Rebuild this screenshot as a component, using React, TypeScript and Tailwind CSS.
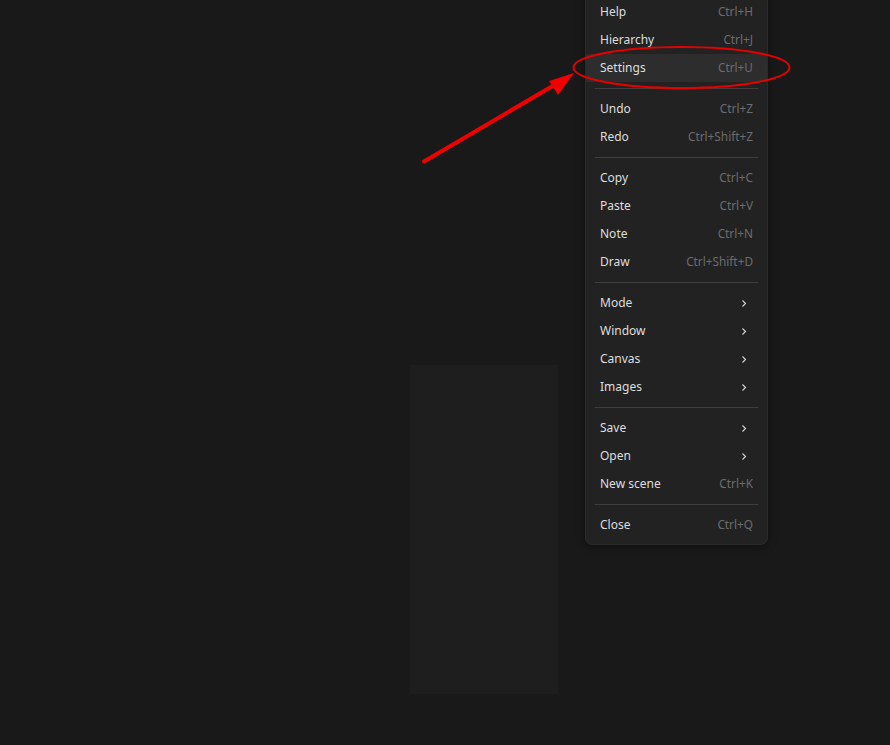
import React from "react";

type Item =
  | { kind: "item"; label: string; shortcut?: string; sub?: boolean; active?: boolean }
  | { kind: "sep" };

const items: Item[] = [
  { kind: "item", label: "Help", shortcut: "Ctrl+H" },
  { kind: "item", label: "Hierarchy", shortcut: "Ctrl+J" },
  { kind: "item", label: "Settings", shortcut: "Ctrl+U", active: true },
  { kind: "sep" },
  { kind: "item", label: "Undo", shortcut: "Ctrl+Z" },
  { kind: "item", label: "Redo", shortcut: "Ctrl+Shift+Z" },
  { kind: "sep" },
  { kind: "item", label: "Copy", shortcut: "Ctrl+C" },
  { kind: "item", label: "Paste", shortcut: "Ctrl+V" },
  { kind: "item", label: "Note", shortcut: "Ctrl+N" },
  { kind: "item", label: "Draw", shortcut: "Ctrl+Shift+D" },
  { kind: "sep" },
  { kind: "item", label: "Mode", sub: true },
  { kind: "item", label: "Window", sub: true },
  { kind: "item", label: "Canvas", sub: true },
  { kind: "item", label: "Images", sub: true },
  { kind: "sep" },
  { kind: "item", label: "Save", sub: true },
  { kind: "item", label: "Open", sub: true },
  { kind: "item", label: "New scene", shortcut: "Ctrl+K" },
  { kind: "sep" },
  { kind: "item", label: "Close", shortcut: "Ctrl+Q" },
];

function Chevron() {
  return (
    <svg width="6" height="9" viewBox="0 0 6 9" className="mr-[6px]">
      <path d="M1.5 1.5 L4.5 4.5 L1.5 7.5" fill="none" stroke="#cfcfcf" strokeWidth="1.2" />
    </svg>
  );
}

function ContextMenu() {
  return (
    <div className="mt-[-9px] w-[183px] self-start rounded-b-[7px] border border-[#2a2a2a] bg-[#222222] pt-[6px] pb-[5px] shadow-[0_2px_8px_rgba(0,0,0,0.4)]">
      {items.map((it, i) =>
        it.kind === "sep" ? (
          <div key={i} className="mx-[9px] mt-[6px] mb-[6px] h-px bg-[#3e3e3e]" />
        ) : (
          <div
            key={i}
            className={`flex h-[28px] items-center justify-between pl-[14px] pr-[14px] ${
              it.active ? "bg-[#2d2d2d]" : ""
            }`}
          >
            <span className="text-[12px] text-[#dedede]">{it.label}</span>
            {it.sub ? (
              <Chevron />
            ) : (
              <span className="text-[11.8px] text-[#6c6c6c]">{it.shortcut}</span>
            )}
          </div>
        )
      )}
    </div>
  );
}

export default function App() {
  return (
    <div
      className="relative flex h-[745px] w-[890px] overflow-hidden bg-[#191919]"
      style={{ fontFamily: '"Segoe UI", "Noto Sans", "Open Sans", sans-serif' }}
    >
      <div className="w-[410px] shrink-0" />
      <div className="shrink-0 pt-[365px]">
        <div className="h-[329px] w-[148px] bg-[#1e1e1e]" />
      </div>
      <div className="w-[27px] shrink-0" />
      <ContextMenu />

      {/* annotation overlay */}
      <svg
        className="pointer-events-none absolute inset-0"
        width="890"
        height="745"
        viewBox="0 0 890 745"
      >
        <ellipse cx="681.5" cy="67.5" rx="108" ry="20.5" fill="none" stroke="#e60000" strokeWidth="2" />
        <line x1="424" y1="161.5" x2="556" y2="84" stroke="#f00000" strokeWidth="4" strokeLinecap="round" />
        <polygon points="574,73 549,81 558,95" fill="#f00000" />
      </svg>
    </div>
  );
}
